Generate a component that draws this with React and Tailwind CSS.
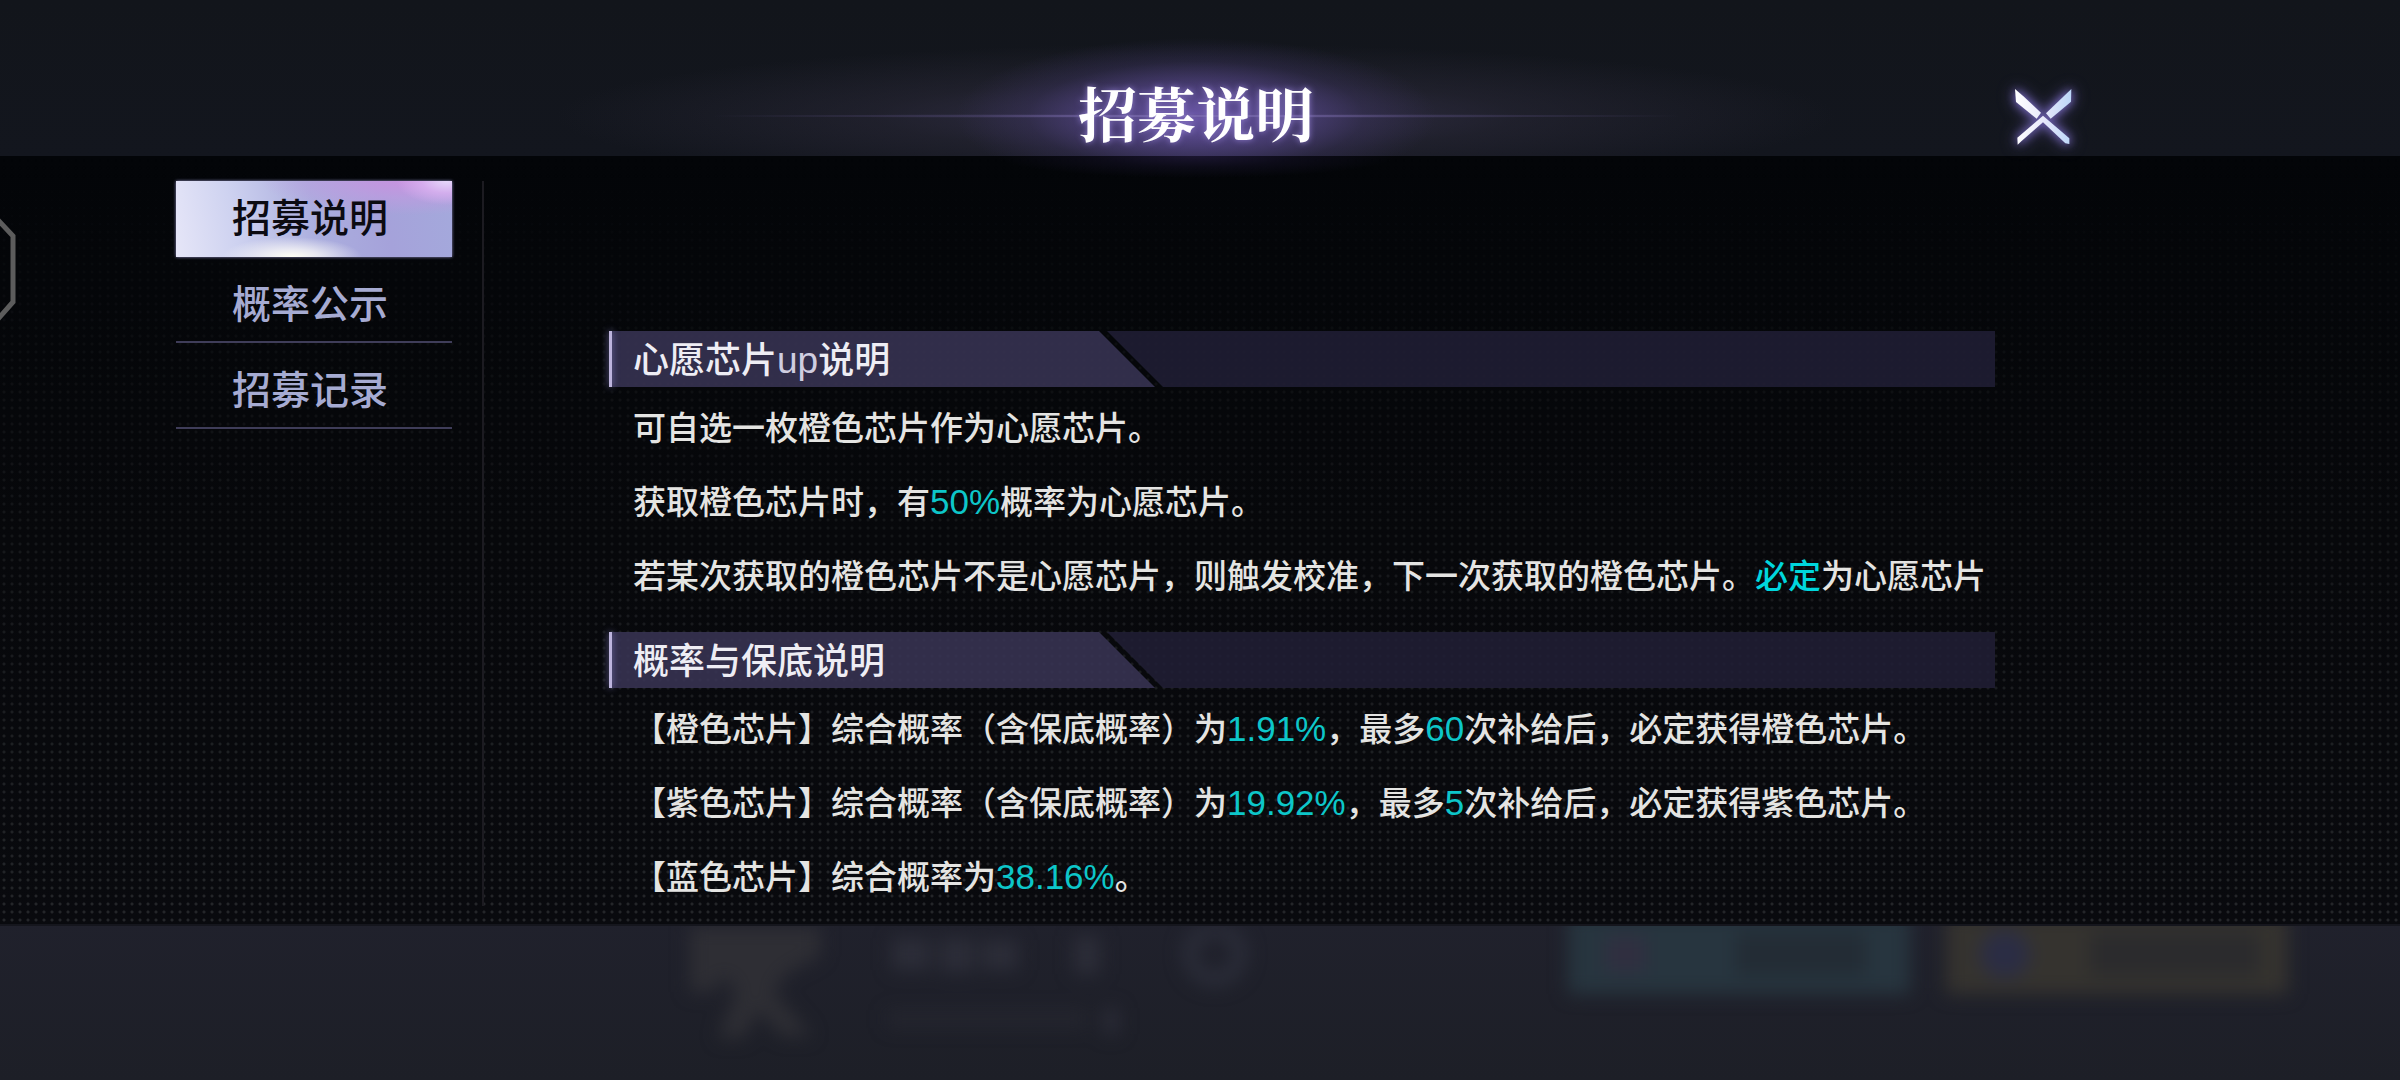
import React, { useState } from 'react';

const tabs = [
    { id: 'info', label: '招募说明' },
    { id: 'rates', label: '概率公示' },
    { id: 'history', label: '招募记录' },
];

// strings are plain text, { hl } parts are highlighted
const sections = [
    {
        title: ['心愿芯片', { latin: 'up' }, '说明'],
        lines: [
            ['可自选一枚橙色芯片作为心愿芯片。'],
            ['获取橙色芯片时，有', { hl: '50%' }, '概率为心愿芯片。'],
            ['若某次获取的橙色芯片不是心愿芯片，则触发校准，下一次获取的橙色芯片。', { word: '必定' }, '为心愿芯片'],
        ],
    },
    {
        title: ['概率与保底说明'],
        lines: [
            ['【橙色芯片】综合概率（含保底概率）为', { hl: '1.91%' }, '，最多', { hl: '60' }, '次补给后，必定获得橙色芯片。'],
            ['【紫色芯片】综合概率（含保底概率）为', { hl: '19.92%' }, '，最多', { hl: '5' }, '次补给后，必定获得紫色芯片。'],
            ['【蓝色芯片】综合概率为', { hl: '38.16%' }, '。'],
        ],
    },
];

const RichText = ({ parts }) =>
    parts.map((part, i) => {
        if (typeof part === 'string') return <React.Fragment key={i}>{part}</React.Fragment>;
        if (part.hl) return <span key={i} className="font-['Liberation_Sans',sans-serif] text-[35px] font-normal text-[#0dc6c9]">{part.hl}</span>;
        if (part.word) return <span key={i} className="text-[#00d6dd]">{part.word}</span>;
        return <span key={i} className="font-['Liberation_Sans',sans-serif] text-[37px] font-normal text-[#cfcde0]">{part.latin}</span>;
    });

const CloseIcon = () => (
    <svg viewBox="86 30 216 216" className="w-[72px] h-[72px] overflow-visible [filter:drop-shadow(0_0_4px_#7a6cc4)_drop-shadow(0_0_7px_#5d5296)]" aria-hidden="true">
        <defs>
            <linearGradient id="blade" x1="107" x2="276" y1="0" y2="0" gradientUnits="userSpaceOnUse">
                <stop offset="0" stopColor="#ffffff" />
                <stop offset="0.5" stopColor="#e8e9fb" />
                <stop offset="1" stopColor="#bcd6f8" />
            </linearGradient>
        </defs>
        <g fill="url(#blade)">
            <path d="M107 57 L134 80 L185 128 L172 146 L110 96 Z" />
            <path d="M276 57 L275 95 L214 146 L200 130 Z" />
            <path d="M191 137 L270 205 L270 222 L258 220 L191 157 L126 214 L115 224 L114 203 Z" />
        </g>
    </svg>
);

const Header = () => (
    <header className="relative z-10 grid grid-cols-[1fr_auto_1fr] items-end pt-[76px] pb-1 pr-2">
        {/* title flare */}
        <div className="pointer-events-none absolute inset-x-0 top-[28px] h-[128px] bg-[radial-gradient(ellipse_500px_2px_at_calc(50%-4px)_88px,#8878be_0%,#5f548866_50%,transparent_100%),radial-gradient(ellipse_240px_78px_at_calc(50%-4px)_88px,#6b58a8_0%,#58488fb3_38%,#41376b52_70%,transparent_100%),radial-gradient(ellipse_640px_72px_at_calc(50%-4px)_88px,#4a426899_0%,#37334759_50%,transparent_100%)]" />
        <div className="pointer-events-none absolute inset-x-0 top-full h-6 bg-[radial-gradient(ellipse_200px_22px_at_calc(50%-4px)_0,#2a204a99_0%,#1a153066_50%,transparent_100%)]" />
        <span />
        <h1 className="relative pb-1 font-['Noto_Serif_CJK_SC','Noto_Sans_CJK_SC',serif] font-bold text-[59px] leading-[72px] text-white [text-shadow:0_0_6px_#8a78c8]">
            招募说明
        </h1>
        <button type="button" aria-label="关闭" className="relative justify-self-end mr-[312px] cursor-pointer">
            <CloseIcon />
        </button>
    </header>
);

const SideTabs = ({ active, onChange }) => (
    <nav className="relative flex w-[276px] flex-none flex-col gap-[10px] text-[39px] font-medium leading-[68px]">
        {tabs.map((tab) => (
            <button
                key={tab.id}
                type="button"
                onClick={() => onChange(tab.id)}
                className={
                    tab.id === active
                        ? 'h-[76px] cursor-pointer pr-2 pb-2 text-[#0c0b12] shadow-[0_0_3px_#8f8cc0] bg-[radial-gradient(ellipse_70px_20px_at_42%_100%,#fffff4_0%,#f4f3f5cc_40%,transparent_100%),radial-gradient(ellipse_50px_24px_at_98%_0%,#e6d8fa_0%,#dcb4f2bb_50%,transparent_100%),radial-gradient(ellipse_150px_34px_at_85%_0%,#c893e0_0%,#bf9be0aa_50%,transparent_100%),linear-gradient(80deg,#e6e6f8_0%,#ced2f0_22%,#abaede_50%,#a5a2da_75%,#a4a9dc_100%)]'
                        : 'h-[76px] cursor-pointer border-b-2 border-[#3f3d59] pr-2 pb-[6px] text-[#a6abd2]'
                }
            >
                {tab.label}
            </button>
        ))}
    </nav>
);

const SectionTitle = ({ parts }) => (
    <div className="relative flex h-14">
        <h2 className="w-[546px] flex-none bg-[#3a3556d9] pl-[24px] text-[36px] font-medium leading-[52px] text-[#eeedf4] [clip-path:polygon(0_0,calc(100%-56px)_0,100%_100%,0_100%)]">
            <RichText parts={parts} />
        </h2>
        <div className="-ml-[48px] flex-1 bg-[#211e36d9] [clip-path:polygon(0_0,100%_0,100%_100%,56px_100%)]" />
        <span className="absolute left-0 top-0 h-full w-[3px] bg-[#bdb4dd] shadow-[0_0_7px_#7c78b8]" />
    </div>
);

const Blurred = () => (
    <div className="flex h-[116px] items-start pl-[690px] pr-[112px] blur-[9px]" aria-hidden="true">
        <svg viewBox="0 0 130 116" className="w-[130px] flex-none">
            <path d="M0 -10 H130 V30 L96 48 L84 66 L122 110 H92 L68 84 L54 112 H28 L46 66 L34 50 L22 66 H0 Z" fill="#2e2e34" />
        </svg>
        <svg viewBox="0 0 380 116" className="ml-[66px] w-[380px] flex-none">
            <g fill="#2c2d38">
                <rect x="6" y="12" width="38" height="32" />
                <rect x="54" y="12" width="34" height="34" />
                <rect x="96" y="14" width="36" height="30" />
                <rect x="188" y="10" width="26" height="38" />
                <rect x="218" y="82" width="14" height="26" />
                <rect x="0" y="84" width="200" height="18" opacity="0.4" />
            </g>
            <circle cx="329" cy="28" r="25" fill="none" stroke="#2b2d39" strokeWidth="15" />
        </svg>
        <div className="ml-auto flex gap-9">
            <div className="-mt-3 flex h-[80px] w-[342px] items-center gap-[90px] bg-[#27353f] pl-[38px]">
                <span className="h-9 w-10 bg-[#302f40]" />
                <span className="h-11 w-[130px] bg-[#232c35]" />
            </div>
            <div className="-mt-3 flex h-[80px] w-[342px] items-center gap-[60px] bg-[#35332f] pl-[34px]">
                <span className="h-12 w-[50px] rounded-full bg-[#2b2d44]" />
                <span className="h-11 w-[170px] bg-[#2b2b2d]" />
            </div>
        </div>
    </div>
);

export default function App() {
    const [active, setActive] = useState('info');

    return (
        <div lang="zh-CN" className="flex min-h-screen flex-col bg-[linear-gradient(#12151b_0,#13161e_156px,#20212c_85%,#1d1f27_100%)] font-['Noto_Sans_CJK_SC',sans-serif]">
            <Header />

            <main className="relative flex flex-1 bg-[linear-gradient(#030508,#07080b_50%,#090a0e)] pl-[176px] pt-[25px] pb-2">
                {/* dot grid */}
                <div className="pointer-events-none absolute inset-0 bg-[radial-gradient(circle_at_50%_50%,#25272a_0,#25272a_1px,transparent_2px)] bg-[size:8px_8px] [mask-image:linear-gradient(#0000_0%,#0003_20%,#0008_55%,#000_100%)]" />
                <svg viewBox="0 0 18 104" className="absolute left-0 top-[62px] h-[104px] w-[18px]" aria-hidden="true">
                    <path d="M-2 2 L13 18 V84 L-2 101" fill="none" stroke="#5c5c5c" strokeWidth="5" />
                </svg>

                <SideTabs active={active} onChange={setActive} />
                <div className="relative mb-[10px] ml-[30px] w-[2px] flex-none bg-[#1c1b21]" />

                <div className="relative ml-[125px] mr-[405px] flex-1 pt-[150px]">
                    {sections.map((section, i) => (
                        <section key={i} className={i > 0 ? 'mt-[21px]' : ''}>
                            <SectionTitle parts={section.title} />
                            <div className="pl-[24px] pt-[2px] text-[33px] font-medium text-[#e4e4e2]">
                                {section.lines.map((line, j) => (
                                    <p key={j} className="h-[74px] whitespace-nowrap leading-[74px]">
                                        <RichText parts={line} />
                                    </p>
                                ))}
                            </div>
                        </section>
                    ))}
                </div>
            </main>

            <footer className="overflow-hidden border-t-2 border-[#15161d] pb-[38px]">
                <Blurred />
            </footer>
        </div>
    );
}
